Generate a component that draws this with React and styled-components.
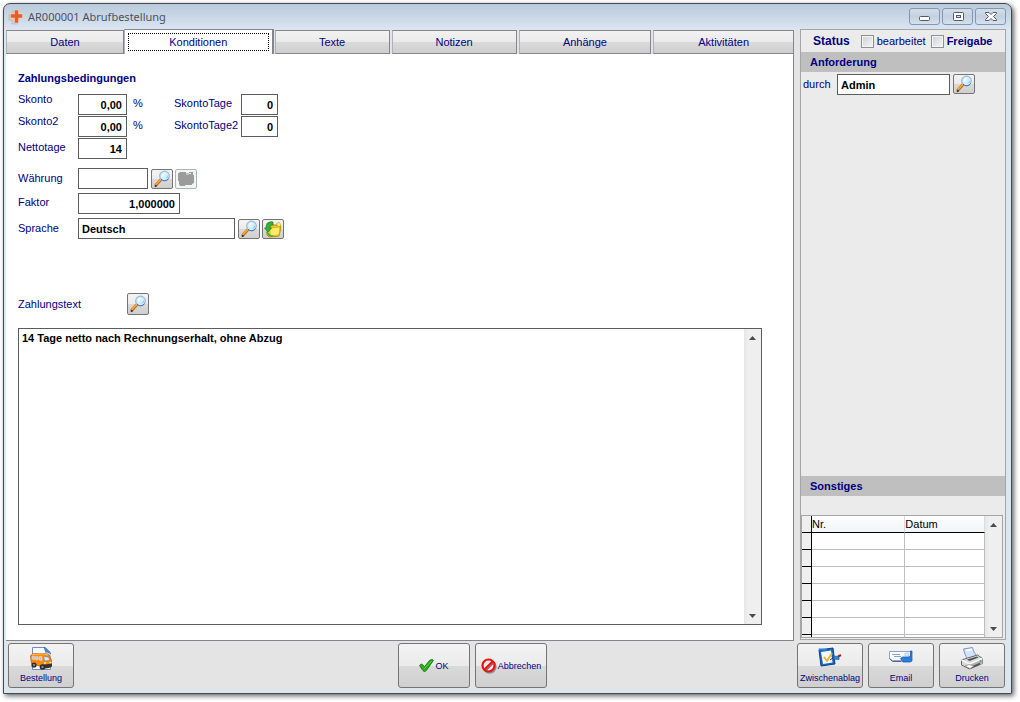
import React, { useState } from 'react';
import styled, { createGlobalStyle, css } from 'styled-components';

const GlobalStyle = createGlobalStyle`
    * {
        box-sizing: border-box;
    }
    body {
        margin: 0;
        background: white;
        color: #000080;
        font-family: 'Liberation Sans', Arial, sans-serif;
        font-size: 11px;
    }
    button, input, textarea {
        font-family: inherit;
        font-size: inherit;
        color: inherit;
    }
`;

// icons

const AppIcon = () => (
    <svg width="16" height="16" viewBox="0 0 16 16">
        <path d="M1 6h4V2h4v4h2v5H9v4H4v-4H1z" fill="#cfcfcf" stroke="#bdbdbd" />
        <path d="M6.500 1h4v4h4v4h-4v5h-4V9h-4V5h4z" fill="#ee5a24" stroke="#f5d9cf" strokeWidth=".5" />
    </svg>
);

const MinimizeIcon = () => (
    <svg width="14" height="12" viewBox="0 0 14 12">
        <rect x="1.5" y="5.5" width="10" height="4" rx="1" fill="white" stroke="#535a68" />
    </svg>
);

const MaximizeIcon = () => (
    <svg width="14" height="12" viewBox="0 0 14 12">
        <rect x="2.5" y="1.5" width="10" height="8" rx="1" fill="white" stroke="#535a68" />
        <rect x="5.5" y="4.5" width="4" height="2" fill="#dbe5f0" stroke="#535a68" />
    </svg>
);

const CloseIcon = () => (
    <svg width="14" height="12" viewBox="0 0 14 12">
        <path
            d="M1.500 1.500H5l2 2 2-2h3.500v1L9.500 5.500l3 3v1H9l-2-2-2 2H1.500v-1l3-3-3-3z"
            fill="white"
            stroke="#535a68"
            strokeLinejoin="round"
        />
    </svg>
);

const SearchIcon = () => (
    <svg width="18" height="18" viewBox="0 0 18 18">
        <path d="M3 15l5-5.500" stroke="#b5651a" strokeWidth="3" strokeLinecap="round" />
        <path d="M3 14.300l4.800-5" stroke="#ffa42a" strokeWidth="1.800" strokeLinecap="round" />
        <path d="M2 15.500l1.500 1" stroke="#3c2a28" strokeWidth="2" />
        <circle cx="11.500" cy="6" r="4.800" fill="#d3f0fd" stroke="#9db9e2" strokeWidth="1.300" />
        <path d="M8 9.200a4.800 4.800 0 0 0 7.500-.5" fill="none" stroke="#4f70ae" strokeWidth="1" />
        <path d="M8.500 5.500a3 3 0 0 1 3.500-2.500l-2 4z" fill="white" />
        <path d="M12 9l3-4v2.500z" fill="#8cd3f6" />
    </svg>
);

const DisabledFolderIcon = () => (
    <svg width="18" height="18" viewBox="0 0 18 18">
        <path d="M1 3.500L3 2h6v1h3V2h4v3h1v8l-2 1v1H8v1H3l-1-2v-3H1z" fill="#9b9b9b" />
        <path d="M9 4h3M12 3.500h2" stroke="#e8e8e8" />
    </svg>
);

const FolderIcon = () => (
    <svg width="18" height="18" viewBox="0 0 18 18">
        <path d="M3 3h5l1 2h7l1 2-2 9-10 1-2-2z" fill="#f3c51d" stroke="#b98f0a" />
        <path d="M6 8l10-1-1 8-9 1z" fill="#ffed68" stroke="#d7a70e" strokeWidth=".7" />
        <path d="M12 4l3-2 2 3-2 2z" fill="#ffef7a" stroke="#c99b10" strokeWidth=".6" />
        <path
            d="M9 2C5 1 2 4 2 8H.500L4 12l3.500-4H6c-.5-2 1-3 3-3z"
            fill="#32b43c"
            stroke="#137a24"
            strokeWidth=".7"
        />
        <path d="M3 12c1 3 3 4 6 4" fill="none" stroke="#32b43c" strokeWidth="1.500" />
    </svg>
);

const VanIcon = () => (
    <svg width="24" height="24" viewBox="0 0 24 24">
        <path d="M3.500.500h13l5 5v17h-18z" fill="#f4f8ff" stroke="#7b86c8" />
        <path d="M15 0l7 7-5-1z" fill="#3c86dc" stroke="#2b62b0" strokeWidth=".6" />
        <path d="M17 5l5 2v7l-5-5z" fill="#bcd6f7" />
        <path d="M1.500 9c1-2 3-2.500 7-2.500 6 0 10 0 12 2l2 5v4l-3 2.500-9-1-8-2.500z" fill="#f98b12" stroke="#b85a0a" strokeWidth=".8" />
        <path d="M3 8c4-1.500 12-1.500 16 0" fill="none" stroke="#ffc163" />
        <path d="M3 9.500h2.500v3L3 12zM6.500 9.500H9v3.500l-2.500-.5zM10 9.500h3v4l-3-.5z" fill="#b7c6ee" stroke="#fff2d2" strokeWidth=".4" />
        <path d="M14.500 9.500l5 .5 1.500 3.500-5.500.500z" fill="#dfe8fa" stroke="#7f6f74" strokeWidth=".6" />
        <path d="M12 18l11-1.500v3L20 21l-8 1z" fill="#343434" />
        <circle cx="5" cy="18" r="2.600" fill="#2c2c2c" />
        <circle cx="13.500" cy="20" r="2.800" fill="#2c2c2c" />
        <circle cx="5" cy="18" r="1" fill="#a2a2a2" />
        <circle cx="13.500" cy="20" r="1.100" fill="#a2a2a2" />
        <path d="M15 16h2M20.500 15.500h2" stroke="#fff0a8" strokeWidth="1.500" />
    </svg>
);

const CheckIcon = () => (
    <svg width="15" height="13" viewBox="0 0 15 13">
        <path
            d="M.6 6.500c1-1.800 2.800-1.800 3.600 0l1.300 1.300L10.500 1.500C12 .3 14 .300 14.400 1.500L7.500 11.300c-1.200 1.500-2.800 1.500-3.800 0z"
            fill="#2cb01c"
            stroke="#0f7410"
            strokeWidth=".9"
        />
        <path d="M5.500 9.500L12.500 2" stroke="#5fd040" strokeWidth="1" />
    </svg>
);

const CancelIcon = () => (
    <svg width="16" height="16" viewBox="0 0 16 16">
        <circle cx="8.600" cy="8.800" r="6" fill="none" stroke="#8d8d8d" strokeWidth="2" />
        <circle cx="7.500" cy="7.500" r="6" fill="#ececec" stroke="#f40d0d" strokeWidth="2.200" />
        <path d="M5 12.500l7.500-7.500" stroke="#7e6060" strokeWidth="1.200" />
        <path d="M3.500 11.500l8-8" stroke="#f40d0d" strokeWidth="2.200" />
    </svg>
);

const ClipboardIcon = () => (
    <svg width="26" height="20" viewBox="0 0 26 20">
        <path d="M2 3l14-2 2 16-14 2z" fill="#1c63c2" stroke="#0e3f8c" />
        <path d="M4 5l10-1.500 1.500 12L6 17z" fill="#f5f8ff" />
        <path d="M1.500 1.500h7l2 2H2z" fill="#2585e0" />
        <path d="M7 10l3 4 5-8" fill="none" stroke="#f5b023" strokeWidth="1.800" />
        <path d="M15 9l7 .5v3l-6-.5z" fill="#2f8ae8" stroke="#174f9d" strokeWidth=".7" />
        <path d="M13 13l4-3" stroke="#333" />
        <path d="M21 9.500l3-1.500" stroke="#a4231c" strokeWidth="2" />
    </svg>
);

const MailIcon = () => (
    <svg width="26" height="20" viewBox="0 0 26 20">
        <path d="M1.500 4.500h22v9h-19l-3-2z" fill="#fcfdff" stroke="#91a3cc" />
        <path d="M1.500 11.500l3 3h9" fill="none" stroke="#53648c" />
        <path d="M4 7.500h8M6 9.500h7" stroke="#83a3d4" />
        <path d="M17 6h4v3h-4z" fill="#e2ecff" stroke="#9cb5e2" strokeWidth=".6" />
        <path d="M12.500 11.500l2-1.500h6l2-1V4h1.500v10l-2 1h-7z" fill="#2a7de0" stroke="#1752a4" strokeWidth=".7" />
    </svg>
);

const PrinterIcon = () => (
    <svg width="26" height="24" viewBox="0 0 26 24">
        <path d="M4.500 2l9-1.500c1 4 2 6 5 9l-10 2.500c-2-3-3-6-4-10z" fill="#cfe5ff" stroke="#7b93d4" />
        <path d="M7 3.500l6-1" stroke="white" strokeWidth="2" />
        <path d="M2.500 13l6-2 10-3 5 3.500v5l-13 5.500-8-4z" fill="#d9d9d9" stroke="#666" />
        <path d="M2.500 13l8 4 13-5.500" fill="none" stroke="#f8f8f8" strokeWidth="1.500" />
        <path d="M8 12.500l10-3 1.500 1-9 3.500z" fill="#505050" />
        <path d="M10.500 18v4l13-5.500v-4z" fill="#b3b3b3" />
        <path d="M12 19.500l9-3.800v2L12 21.500z" fill="#555" />
        <path d="M6 19l4-1.500 5 1.500-4 2.500z" fill="white" stroke="#777" strokeWidth=".6" />
        <circle cx="21.500" cy="14" r=".9" fill="#4fb44a" />
    </svg>
);

const Arrow = ({ down }) => (
    <svg width="7" height="4" viewBox="0 0 7 4">
        <path d={down ? 'M0 0h7L3.500 4z' : 'M0 4h7L3.500 0z'} fill="#4a4a4a" />
    </svg>
);

// components

const tabs = [
    { name: 'Daten', size: 118 },
    { name: 'Konditionen', size: 149 },
    { name: 'Texte', size: 115 },
    { name: 'Notizen', size: 125 },
    { name: 'Anhänge', size: 133 },
    { name: 'Aktivitäten', size: 141 },
];

const emptyRows = [1, 2, 3, 4, 5, 6];

const Scroll = () => (
    <ScrollBar>
        <ScrollButton type="button" aria-label="Nach oben">
            <Arrow />
        </ScrollButton>
        <ScrollButton type="button" aria-label="Nach unten">
            <Arrow down />
        </ScrollButton>
    </ScrollBar>
);

const Search = ({ label, tall }) => (
    <IconButton type="button" aria-label={label} $tall={tall}>
        <SearchIcon />
    </IconButton>
);

const Conditions = () => (
    <Panel>
        <Heading>Zahlungsbedingungen</Heading>
        <Rows $gap={1}>
            <Row>
                <Label htmlFor="skonto" $line={10}>Skonto</Label>
                <Field id="skonto" defaultValue="0,00" $width={49} $right />
                <Unit>%</Unit>
                <Label htmlFor="tage" $width={67} $line={18}>SkontoTage</Label>
                <Field id="tage" defaultValue="0" $width={37} $right />
            </Row>
            <Row>
                <Label htmlFor="skonto2" $line={10}>Skonto2</Label>
                <Field id="skonto2" defaultValue="0,00" $width={49} $right />
                <Unit>%</Unit>
                <Label htmlFor="tage2" $width={67} $line={18}>SkontoTage2</Label>
                <Field id="tage2" defaultValue="0" $width={37} $right />
            </Row>
            <Row>
                <Label htmlFor="netto" $line={18}>Nettotage</Label>
                <Field id="netto" defaultValue="14" $width={49} $right />
            </Row>
        </Rows>
        <Rows $gap={4}>
            <Row>
                <Label htmlFor="waehrung">Währung</Label>
                <Field id="waehrung" $width={70} />
                <Tools>
                    <Search label="Währung suchen" />
                    <IconButton type="button" aria-label="Währung öffnen" disabled>
                        <DisabledFolderIcon />
                    </IconButton>
                </Tools>
            </Row>
            <Row>
                <Label htmlFor="faktor" $line={18}>Faktor</Label>
                <Field id="faktor" defaultValue="1,000000" $width={102} $right />
            </Row>
            <Row>
                <Label htmlFor="sprache">Sprache</Label>
                <Field id="sprache" defaultValue="Deutsch" $width={157} />
                <Tools>
                    <Search label="Sprache suchen" />
                    <IconButton type="button" aria-label="Sprache öffnen">
                        <FolderIcon />
                    </IconButton>
                </Tools>
            </Row>
        </Rows>
        <TextHead>
            <label htmlFor="text">Zahlungstext</label>
            <Search label="Zahlungstext suchen" tall />
        </TextHead>
        <TextFrame>
            <TextArea id="text" defaultValue="14 Tage netto nach Rechnungserhalt, ohne Abzug" />
            <Scroll />
        </TextFrame>
    </Panel>
);

const SidePanel = () => (
    <Side>
        <Status>
            <StatusTitle>Status</StatusTitle>
            <Check>
                <CheckBox type="checkbox" />
                bearbeitet
            </Check>
            <Check $bold>
                <CheckBox type="checkbox" />
                Freigabe
            </Check>
        </Status>
        <Band>Anforderung</Band>
        <Request>
            <label htmlFor="durch">durch</label>
            <RequestField id="durch" defaultValue="Admin" />
            <Search label="Person suchen" />
        </Request>
        <Band>Sonstiges</Band>
        <TableFrame>
            <Table>
                <thead>
                    <tr>
                        <Selector as="th" />
                        <Th $width="51%">Nr.</Th>
                        <Th>Datum</Th>
                    </tr>
                </thead>
                <tbody>
                    {emptyRows.map(row => (
                        <tr key={row}>
                            <Selector />
                            <Td />
                            <Td />
                        </tr>
                    ))}
                    <tr>
                        <Selector $cut />
                        <Td $cut />
                        <Td $cut />
                    </tr>
                </tbody>
            </Table>
            <Scroll />
        </TableFrame>
    </Side>
);

const App = () => {
    const [active, setActive] = useState('Konditionen');

    return (
        <Page>
            <GlobalStyle />
            <Window>
                <TitleBar>
                    <AppIcon />
                    <Title>AR000001 Abrufbestellung</Title>
                    <WindowButton type="button" aria-label="Minimieren">
                        <MinimizeIcon />
                    </WindowButton>
                    <WindowButton type="button" aria-label="Maximieren">
                        <MaximizeIcon />
                    </WindowButton>
                    <WindowButton type="button" aria-label="Schließen">
                        <CloseIcon />
                    </WindowButton>
                </TitleBar>
                <Body>
                    <Main>
                        <Tabs role="tablist">
                            {tabs.map(({ name, size }) => (
                                <Tab
                                    key={name}
                                    type="button"
                                    role="tab"
                                    aria-selected={name === active}
                                    $active={name === active}
                                    $size={size}
                                    onClick={() => setActive(name)}
                                >
                                    <TabText $active={name === active}>{name}</TabText>
                                </Tab>
                            ))}
                        </Tabs>
                        <Conditions />
                    </Main>
                    <SidePanel />
                </Body>
                <Footer>
                    <Group $grow={390}>
                        <ActionButton type="button">
                            <VanIcon />
                            Bestellung
                        </ActionButton>
                    </Group>
                    <Group $gap={5}>
                        <ActionButton type="button" $inline>
                            <CheckIcon />
                            OK
                        </ActionButton>
                        <ActionButton type="button" $inline>
                            <CancelIcon />
                            Abbrechen
                        </ActionButton>
                    </Group>
                    <Group $grow={458} $gap={5} $end>
                        <ActionButton type="button">
                            <ClipboardIcon />
                            Zwischenablag
                        </ActionButton>
                        <ActionButton type="button">
                            <MailIcon />
                            Email
                        </ActionButton>
                        <ActionButton type="button">
                            <PrinterIcon />
                            Drucken
                        </ActionButton>
                    </Group>
                </Footer>
            </Window>
        </Page>
    );
};

const Page = styled.div`
    display: flex;
    min-height: 100vh;
    padding: 3px 8px 8px 3px;
`;

const Window = styled.div`
    flex: 1;
    display: flex;
    flex-direction: column;
    padding: 0 5px 3px 2px;
    border: 1px solid #44484e;
    border-radius: 7px 7px 0 0;
    background: linear-gradient(#b9cadb, #dae6f2 26px);
    box-shadow: 2px 2px 5px rgba(0, 0, 0, 0.6);
`;

const TitleBar = styled.header`
    display: flex;
    align-items: center;
    gap: 2px;
    height: 25px;
    padding-left: 2px;
`;

const Title = styled.h1`
    flex: 1;
    margin: 0 0 0 2px;
    color: #4b525c;
    font: 11px 'Noto Sans', sans-serif;
`;

const WindowButton = styled.button`
    display: flex;
    align-items: center;
    justify-content: center;
    width: 31px;
    height: 17px;
    padding: 0;
    border: 1px solid #8795b0;
    border-radius: 3px;
    background: linear-gradient(#d3deea, #c3d1e0 50%, #d5e1ee);
`;

const Body = styled.div`
    flex: 1;
    display: flex;
    gap: 6px;
    background: #e4e4e4;
`;

const Main = styled.main`
    flex: 1;
    display: flex;
    flex-direction: column;
`;

const Tabs = styled.div`
    display: flex;
    align-items: flex-end;
    gap: 2px;
    height: 25px;
`;

const Tab = styled.button`
    flex: ${({ $size }) => $size} 1 0;
    height: 24px;
    padding: 0;
    border: 1px solid #85858f;
    border-left-color: #b0b0b8;
    background: linear-gradient(#f1f1f1, #ebebeb 50%, #dadada 51%, #cecece);
    ${({ $active }) =>
        $active &&
        css`
            height: 25px;
            margin: 0 -1px 0 -2px;
            border-width: 1px 2px 0 1px;
            background: white;
            outline: none;
        `}
`;

const TabText = styled.span`
    display: block;
    ${({ $active }) =>
        $active &&
        css`
            height: 18px;
            margin: 0 3px;
            border: 1px dotted black;
            line-height: 16px;
        `}
`;

const Panel = styled.section`
    flex: 1;
    display: flex;
    flex-direction: column;
    padding: 17px 31px 15px 12px;
    border-right: 1px solid #85858f;
    border-bottom: 1px solid #85858f;
    background: white;
`;

const Heading = styled.h2`
    margin: 0 0 9px;
    font-size: 11px;
    line-height: 14px;
`;

const Rows = styled.div`
    display: flex;
    flex-direction: column;
    gap: ${({ $gap }) => $gap}px;
    margin-bottom: 9px;
`;

const Row = styled.div`
    display: flex;
    align-items: flex-start;
`;

const Label = styled.label`
    width: ${({ $width }) => $width || 60}px;
    line-height: ${({ $line }) => $line || 20}px;
`;

const Unit = styled.span`
    width: 47px;
    padding-left: 6px;
    line-height: 18px;
`;

const Field = styled.input`
    width: ${({ $width }) => $width}px;
    height: 21px;
    padding: 0 4px 0 3px;
    border: 1px solid #5c5c5c;
    background: white;
    color: black;
    font-weight: bold;
    text-align: ${({ $right }) => ($right ? 'right' : 'left')};
`;

const Tools = styled.div`
    display: flex;
    align-self: flex-end;
    gap: 2px;
    margin-left: 3px;
`;

const IconButton = styled.button`
    display: flex;
    align-items: center;
    justify-content: center;
    flex: none;
    width: 22px;
    height: ${({ $tall }) => ($tall ? 22 : 20)}px;
    padding: 0;
    border: 1px solid #747474;
    border-radius: 2px;
    background: linear-gradient(#f3f3f3, #ebebeb 50%, #d9d9d9 51%, #cfcfcf);
    &:disabled {
        border-color: #adb2b5;
        background: #f4f4f4;
    }
`;

const TextHead = styled.div`
    display: flex;
    align-items: center;
    justify-content: space-between;
    width: 131px;
    margin: 45px 0 13px;
`;

const TextFrame = styled.div`
    flex: 1;
    display: flex;
    border: 1px solid #5c5c5c;
`;

const TextArea = styled.textarea`
    flex: 1;
    padding: 3px;
    border: 0;
    outline: none;
    resize: none;
    background: white;
    color: black;
    font-weight: bold;
    line-height: 13px;
`;

const ScrollBar = styled.div`
    display: flex;
    flex-direction: column;
    justify-content: space-between;
    width: 17px;
    background: linear-gradient(90deg, #e6e6e6, #efefef 4px);
`;

const ScrollButton = styled.button`
    display: flex;
    align-items: center;
    justify-content: center;
    height: 17px;
    padding: 0;
    border: 0;
    background: none;
`;

const Side = styled.aside`
    display: flex;
    flex-direction: column;
    width: 206px;
    margin-bottom: 1px;
    border: 1px solid #a5a5a5;
    background: #ebebeb;
`;

const Status = styled.div`
    display: flex;
    align-items: center;
    gap: 5px;
    height: 22px;
    padding-left: 12px;
`;

const StatusTitle = styled.h2`
    margin: 0 6px 0 0;
    font-size: 12px;
`;

const Check = styled.label`
    display: flex;
    align-items: center;
    gap: 3px;
    font-weight: ${({ $bold }) => ($bold ? 'bold' : 'normal')};
`;

const CheckBox = styled.input`
    appearance: none;
    width: 13px;
    height: 13px;
    margin: 0;
    border: 1px solid #8e8f8f;
    background: linear-gradient(135deg, #cdd1d6, #f6f6f6);
    box-shadow: inset 0 0 0 1px #f4f4f4;
    &:checked {
        background: #000080;
    }
`;

const Band = styled.h2`
    margin: 0;
    padding-left: 9px;
    background: #bfbfbf;
    font-size: 11px;
    line-height: 20px;
`;

const Request = styled.div`
    flex: 1;
    display: flex;
    align-items: flex-start;
    padding: 2px 30px 0 2px;
    line-height: 20px;
    label {
        width: 34px;
    }
`;

const RequestField = styled(Field)`
    flex: 1;
    min-width: 0;
    margin-right: 3px;
`;

const TableFrame = styled.div`
    display: flex;
    height: 123px;
    margin: 19px 2px 1px 0;
    border: 1px solid #a5a5a5;
    background: white;
`;

const Table = styled.table`
    flex: 1;
    border-collapse: separate;
    border-spacing: 0;
    table-layout: fixed;
    color: black;
`;

const Th = styled.th`
    width: ${({ $width }) => $width || 'auto'};
    height: 17px;
    padding: 0;
    border-right: 1px solid #dcdcdc;
    border-bottom: 1px solid black;
    background: linear-gradient(white, #f1f3f5);
    font-weight: normal;
    text-align: left;
    line-height: 14px;
`;

const Td = styled.td`
    height: ${({ $cut }) => ($cut ? 2 : 17)}px;
    padding: 0;
    border-right: 1px solid #bdbdbd;
    border-bottom: ${({ $cut }) => ($cut ? 0 : '1px solid #bdbdbd')};
`;

const Selector = styled(Td)`
    width: 10px;
    border-right-color: black;
    border-bottom-color: black;
    background: #efefef;
`;

const Footer = styled.footer`
    display: flex;
    padding: 2px 1px 2px 2px;
    background: #e4e4e4;
`;

const Group = styled.div`
    display: flex;
    flex: ${({ $grow }) => ($grow ? `${$grow} 1 0` : 'none')};
    gap: ${({ $gap }) => $gap || 0}px;
    justify-content: ${({ $end }) => ($end ? 'flex-end' : 'flex-start')};
`;

const ActionButton = styled.button`
    display: flex;
    flex-direction: ${({ $inline }) => ($inline ? 'row' : 'column')};
    align-items: center;
    justify-content: ${({ $inline }) => ($inline ? 'center' : 'space-between')};
    gap: 1px;
    width: ${({ $inline }) => ($inline ? 72 : 66)}px;
    height: 45px;
    padding: ${({ $inline }) => ($inline ? 0 : '3px 0 4px')};
    overflow: hidden;
    border: 1px solid #747474;
    border-radius: 3px;
    background: linear-gradient(#f3f3f3, #ebebeb 50%, #dadada 51%, #cfcfcf);
    font-size: 9px;
    white-space: nowrap;
`;

export default App;
